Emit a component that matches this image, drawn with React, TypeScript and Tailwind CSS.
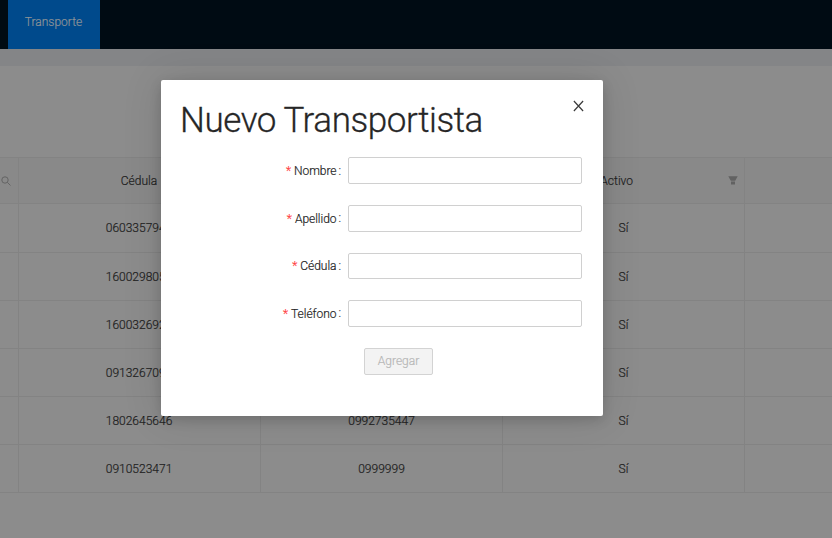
import React from "react";

type Row = { cedula: string; telefono: string };

const rows: Row[] = [
  { cedula: "0603357940", telefono: "" },
  { cedula: "1600298050", telefono: "" },
  { cedula: "1600326920", telefono: "" },
  { cedula: "0913267090", telefono: "" },
  { cedula: "1802645646", telefono: "0992735447" },
  { cedula: "0910523471", telefono: "0999999" },
];

const fields = [
  { label: "Nombre", box: "h-[27px] mb-[21px]", colon: "" },
  { label: "Apellido", box: "h-[27px] mb-[21px]", colon: "pb-[2px]" },
  { label: "Cédula", box: "h-[26px] mb-[21px]", colon: "" },
  { label: "Teléfono", box: "h-[27px] mb-[21px]", colon: "pb-[2px]" },
];

const columns = "grid grid-cols-[19px_242px_242px_242px_1fr]";
const cell = "flex items-center justify-center border-b border-[#838383]";
const divided = "border-r";

function SearchIcon() {
  return (
    <svg width="10" height="10" viewBox="0 0 10 10" fill="none" stroke="#646464" strokeWidth="1">
      <circle cx="4" cy="4" r="3.2" />
      <path d="M6.3 6.3 9.5 9.5" />
    </svg>
  );
}

function FilterIcon() {
  return (
    <svg width="10" height="9" viewBox="0 0 10 9" fill="#626262">
      <path d="M.3.3h9.4L7.2 4.8H2.8zM3 5.4h4V8.5H3z" />
    </svg>
  );
}

function Table() {
  return (
    <div className="mt-[91px] border-t border-[#838383]">
      <div className={`${columns} h-[46px] bg-[#898989]`}>
        <div className={`${cell} ${divided} justify-end pr-[7px]`}>
          <SearchIcon />
        </div>
        <div className={`${cell} ${divided} pr-[1px]`}>Cédula</div>
        <div className={`${cell} ${divided}`}>Teléfono</div>
        <div className={`${cell} ${divided} pr-[6px]`}>
          <span className="ml-auto mr-[95px]">Activo</span>
          <FilterIcon />
        </div>
        <div className={cell} />
      </div>
      {rows.map((r, i) => (
        <div key={r.cedula} className={`${columns} ${i === 0 ? "h-[49px]" : "h-[48px]"}`}>
          <div className={`${cell} ${divided}`} />
          <div className={`${cell} ${divided} pr-[1px]`}>{r.cedula}</div>
          <div className={`${cell} ${divided}`}>{r.telefono}</div>
          <div className={`${cell} ${divided}`}>Sí</div>
          <div className={cell} />
        </div>
      ))}
    </div>
  );
}

function Modal() {
  return (
    <div className="absolute left-[161px] top-[80px] h-[336px] w-[442px] rounded-[2px] bg-white px-[19px] pt-[18px] text-[#262626] shadow-[0_4px_12px_rgba(0,0,0,0.15),0_0_40px_rgba(0,0,0,0.12)]">
      <button className="absolute right-[19px] top-[20px]" aria-label="Close">
        <svg width="11" height="12" viewBox="0 0 11 12" fill="none" stroke="#3a3a3a" strokeWidth="1.2">
          <path d="M.9 1 10.1 11M10.1 1 .9 11" />
        </svg>
      </button>
      <h1 className="h-[59px] whitespace-nowrap text-[35px] font-light leading-[46px] tracking-[-0.43px] [-webkit-text-stroke:0.3px]">Nuevo Transportista</h1>
      <form>
        {fields.map((f) => (
          <div key={f.label} className={`flex items-center ${f.box}`}>
            <label className="flex w-[161px] items-center justify-end">
              <span className="mr-[3px] text-[#ff3a3d]">*</span>
              <span className="tracking-[-0.04px]">{f.label}</span>
              <span className={`ml-[2px] text-[#4a4a4a] ${f.colon}`}>:</span>
            </label>
            <input className="ml-[7px] h-full w-[234px] rounded-[2px] border border-[#d0d0d0] bg-white outline-none" />
          </div>
        ))}
        <button
          disabled
          className="ml-[184px] flex h-[27px] w-[69px] items-center justify-center rounded-[2px] border border-[#d3d3d3] bg-[#f3f3f3] pb-[2px] text-[#b8b8b8]"
        >
          Agregar
        </button>
      </form>
    </div>
  );
}

export default function App() {
  return (
    <div className="relative h-[538px] w-[832px] overflow-hidden bg-[#8c8c8c] font-['Roboto',sans-serif] text-[12px] font-light leading-[18px] text-[#1f1f1f] [-webkit-text-stroke:0.2px]">
      <header className="flex h-[49px] bg-[#000b13] pl-[8px]">
        <div className="flex w-[92px] items-center justify-center bg-[#004a8c] pb-[5px] pr-[1px] text-[#8c9297]">
          Transporte
        </div>
      </header>
      <div className="h-[17px] bg-[#848587]" />
      <Table />
      <Modal />
    </div>
  );
}
